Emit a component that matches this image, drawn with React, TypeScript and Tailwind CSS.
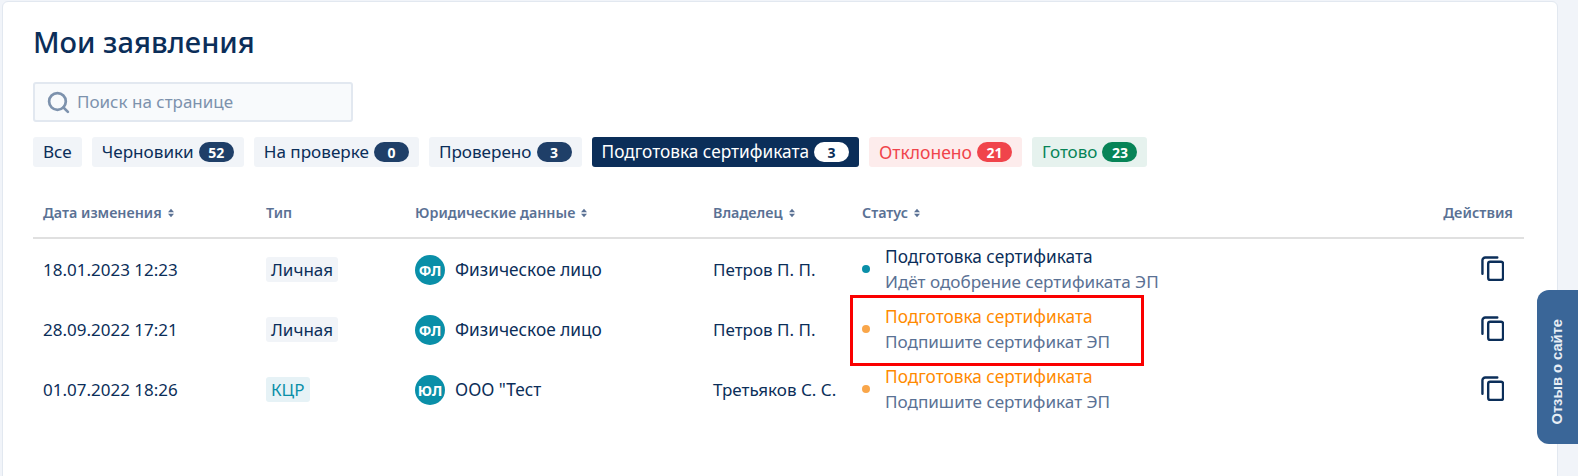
import { Search } from "lucide-react";

const font = "font-['Noto_Sans','Open_Sans',sans-serif]";

const filters = [
  { label: "Все" },
  { label: "Черновики", count: 52 },
  { label: "На проверке", count: 0 },
  { label: "Проверено", count: 3 },
  { label: "Подготовка сертификата", count: 3, kind: "active" },
  { label: "Отклонено", count: 21, kind: "red" },
  { label: "Готово", count: 23, kind: "green" },
];

const chipStyles: Record<string, { chip: string; badge: string }> = {
  default: { chip: "bg-[#f1f4f8] text-[17.1px] text-[#0b2e59]", badge: "bg-[#1f3f68] text-white" },
  active: { chip: "bg-[#0b2e59] text-[17.25px] text-white", badge: "bg-white text-[#0b2e59]" },
  red: { chip: "bg-[#fdecec] text-[17.5px] text-[#f0444b]", badge: "bg-[#f0444b] text-white" },
  green: { chip: "bg-[#e6f2ee] text-[17px] text-[#078457]", badge: "bg-[#078457] text-white" },
};

const rows = [
  {
    date: "18.01.2023 12:23",
    type: "Личная",
    avatar: "ФЛ",
    legal: "Физическое лицо",
    owner: "Петров П. П.",
    status: "Подготовка сертификата",
    hint: "Идёт одобрение сертификата ЭП",
    tone: "teal",
  },
  {
    date: "28.09.2022 17:21",
    type: "Личная",
    avatar: "ФЛ",
    legal: "Физическое лицо",
    owner: "Петров П. П.",
    status: "Подготовка сертификата",
    hint: "Подпишите сертификат ЭП",
    tone: "orange",
    marked: true,
  },
  {
    date: "01.07.2022 18:26",
    type: "КЦР",
    avatar: "ЮЛ",
    legal: 'ООО "Тест',
    owner: "Третьяков С. С.",
    status: "Подготовка сертификата",
    hint: "Подпишите сертификат ЭП",
    tone: "orange",
  },
];

const gridCols = "grid grid-cols-[223px_149px_298px_149px_1fr_100px]";

function SortIcon() {
  return (
    <svg width="6" height="10" viewBox="0 0 7 10" className="ml-[6px] fill-[#5a7194]">
      <path d="M3.5 0 7 4H0zM3.5 10 0 6h7z" />
    </svg>
  );
}

function HeaderCell({ label, sort = true }: { label: string; sort?: boolean }) {
  return (
    <div className="flex items-center pl-[10px]">
      {label}
      {sort && <SortIcon />}
    </div>
  );
}

function CopyIcon() {
  return (
    <svg width="23" height="25" viewBox="0 0 24 26" fill="none" className="stroke-[#0b2e59] stroke-[2.5]">
      <path d="M17 1.5H4.5a3 3 0 0 0-3 3V18.5" strokeLinecap="round" />
      <rect x="7.5" y="6" width="15.5" height="19" rx="2" />
    </svg>
  );
}

export default function App() {
  return (
    <div className={`relative h-[476px] w-[1578px] overflow-hidden bg-[#f1f4f9] ${font}`}>
      <div className="ml-[2px] mt-px h-[490px] w-[1556px] rounded-[6px] border border-[#e2e8f0] bg-white pl-[30px] pr-[33px]">
        <h1 className="mt-[20px] text-[29px] font-medium leading-[40px] text-[#0b2e59]">Мои заявления</h1>

        <div className="mt-[20px] flex h-[40px] w-[320px] items-center gap-[6px] rounded-[3px] border-2 border-[#e2e8f0] bg-[#f8fafc] pl-[11px]">
          <Search size={25} strokeWidth={2.6} className="text-[#7d92ad]" />
          <span className="text-[17px] text-[#7d92ad]">Поиск на странице</span>
        </div>

        <div className="mt-[15px] flex gap-[10px]">
          {filters.map((f) => {
            const style = chipStyles[f.kind ?? "default"];
            return (
              <div key={f.label} className={`flex h-[30px] items-center gap-[5px] rounded-[3px] px-[10px] ${style.chip}`}>
                {f.label}
                {f.count !== undefined && (
                  <span className={`flex h-[20px] w-[35px] items-center justify-center rounded-full text-[14px] font-bold ${style.badge}`}>
                    {f.count}
                  </span>
                )}
              </div>
            );
          })}
        </div>

        <div className={`${gridCols} mt-[30px] h-[42px] border-b-2 border-[#e0e0e0] pb-[9px] text-[14.3px] font-semibold text-[#5a7194]`}>
          <HeaderCell label="Дата изменения" />
          <HeaderCell label="Тип" sort={false} />
          <HeaderCell label="Юридические данные" />
          <HeaderCell label="Владелец" />
          <HeaderCell label="Статус" />
          <div className="flex items-center justify-end pr-[11px] text-[14.5px]">Действия</div>
        </div>

        <div className="mt-px">
          {rows.map((r) => (
            <div key={r.date} className={`${gridCols} h-[60px] items-center text-[17px] text-[#0b2e59]`}>
              <div className="pl-[10px]">{r.date}</div>
              <div className="pl-[10px]">
                <span className={`inline-block rounded-[3px] px-[5px] leading-[25px] ${r.type === "КЦР" ? "bg-[#e6f2f6] text-[#0a8fa8]" : "bg-[#f1f4f8]"}`}>
                  {r.type}
                </span>
              </div>
              <div className="flex items-center gap-[10px] pl-[10px]">
                <span className="flex h-[30px] w-[30px] items-center justify-center rounded-full bg-[#0a8fa8] text-[14px] font-bold text-white">
                  {r.avatar}
                </span>
                <span className="text-[17.25px]">{r.legal}</span>
              </div>
              <div className="pl-[10px]">{r.owner}</div>
              <div className="relative flex items-center gap-[15px] pb-[2px] pl-[10px]">
                <span className={`h-[8px] w-[8px] rounded-full ${r.tone === "teal" ? "bg-[#0a8fa8]" : "bg-[#f9a64a]"}`} />
                <div className="leading-[25px]">
                  <div className={`text-[17.25px] ${r.tone === "orange" ? "text-[#ff8a00]" : ""}`}>{r.status}</div>
                  <div className="text-[17.1px] text-[#5a7194]">{r.hint}</div>
                </div>
                {r.marked && <div className="absolute left-[-2px] top-[-9px] h-[71px] w-[294px] border-[3px] border-[#fa0000]" />}
              </div>
              <div className="flex justify-end pb-[3px] pr-[20px]">
                <CopyIcon />
              </div>
            </div>
          ))}
        </div>
      </div>

      <div className="absolute right-0 top-[290px] flex h-[154px] w-[41px] items-center justify-center rounded-l-[12px] bg-[#3a6698] pt-[10px]">
        <span className="rotate-180 font-['Liberation_Sans',sans-serif] text-[14.7px] font-bold whitespace-nowrap text-[#e8eef5] [writing-mode:vertical-rl]">
          Отзыв о сайте
        </span>
      </div>
    </div>
  );
}
